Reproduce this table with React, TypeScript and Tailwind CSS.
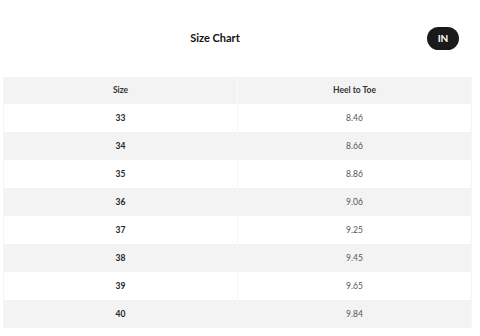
const rows = [
  { size: '33', length: '8.46' },
  { size: '34', length: '8.66' },
  { size: '35', length: '8.86' },
  { size: '36', length: '9.06' },
  { size: '37', length: '9.25' },
  { size: '38', length: '9.45' },
  { size: '39', length: '9.65' },
  { size: '40', length: '9.84' },
]

export default function App() {
  return (
    <div className="w-[480px] h-[336px] bg-white font-['Lato',sans-serif] overflow-hidden">
      {/* Header */}
      <div className="flex items-center h-[76px] pl-[3px] pr-[21px]">
        <div className="flex-1 text-center text-[11px] font-bold text-[#111]">Size Chart</div>
        <button className="w-[32px] h-[23px] rounded-full bg-[#1a1a1a] text-white text-[10px] font-bold flex items-center justify-center">
          IN
        </button>
      </div>

      {/* Table */}
      <div className="mx-[3px] w-[469px] border-x border-[#f6f6f6] mt-[1px]">
        <div className="grid grid-cols-[234px_1fr] h-[27px] bg-[#f3f3f3] text-[8.5px] font-bold text-[#333]">
          <div className="flex items-center justify-center border-r border-[#fbfbfb]">Size</div>
          <div className="flex items-center justify-center">Heel to Toe</div>
        </div>
        {rows.map((r, i) => (
          <div
            key={r.size}
            className={`grid grid-cols-[234px_1fr] h-[28px] text-[8.5px] ${i % 2 === 1 ? 'bg-[#f3f3f3]' : 'bg-white'}`}
          >
            <div className="flex items-center justify-center border-r border-[#f6f6f6] font-bold text-[#222]">{r.size}</div>
            <div className="flex items-center justify-center text-[#555]">{r.length}</div>
          </div>
        ))}
      </div>
    </div>
  )
}
